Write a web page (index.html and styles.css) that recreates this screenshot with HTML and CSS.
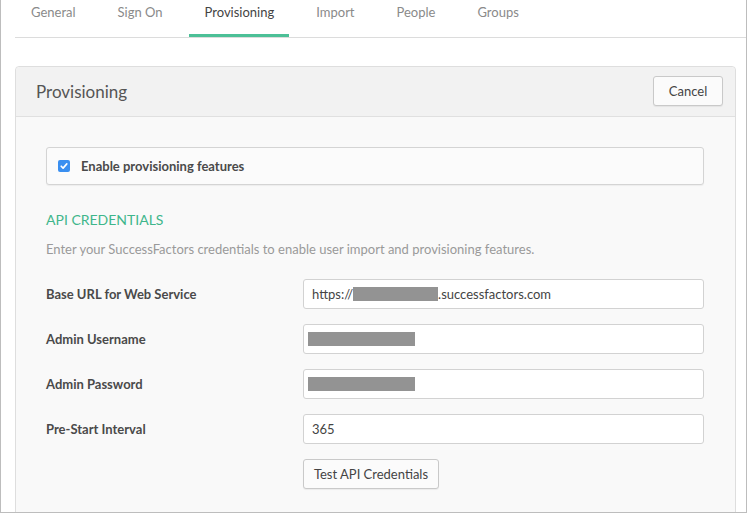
FILE: index.html
```html
<!DOCTYPE html>
<html>
<head>
<meta charset="utf-8">
<link rel="stylesheet" href="styles.css">
</head>
<body>
<div class="frame">
  <nav class="tabs">
    <div class="tab">General</div>
    <div class="tab">Sign On</div>
    <div class="tab active">Provisioning</div>
    <div class="tab">Import</div>
    <div class="tab">People</div>
    <div class="tab">Groups</div>
  </nav>
  <section class="panel">
    <header class="panel-head">
      <h2 class="panel-title">Provisioning</h2>
      <button class="btn">Cancel</button>
    </header>
    <div class="panel-body">
      <label class="check-box">
        <span class="checkbox">
          <svg width="12" height="12" viewBox="0 0 12 12"><path d="M3.2 6.2 L5.1 8.1 L8.8 3.9" fill="none" stroke="#fff" stroke-width="1.6" stroke-linecap="round" stroke-linejoin="round"/></svg>
        </span>
        <span class="check-label">Enable provisioning features</span>
      </label>
      <h3 class="section-title">API CREDENTIALS</h3>
      <p class="desc">Enter your SuccessFactors credentials to enable user import and provisioning features.</p>
      <div class="form">
        <div class="row">
          <div class="label">Base URL for Web Service</div>
          <div class="input">https://<span class="redact r1"></span>.successfactors.com</div>
        </div>
        <div class="row">
          <div class="label">Admin Username</div>
          <div class="input"><span class="redact r2"></span></div>
        </div>
        <div class="row">
          <div class="label">Admin Password</div>
          <div class="input"><span class="redact r2"></span></div>
        </div>
        <div class="row">
          <div class="label">Pre-Start Interval</div>
          <div class="input">365</div>
        </div>
        <div class="row">
          <div class="label"></div>
          <button class="btn btn-test">Test API Credentials</button>
        </div>
      </div>
    </div>
  </section>
</div>
</body>
</html>
```

FILE: styles.css
```css
* { box-sizing: border-box; }
html, body { margin: 0; padding: 0; background: #fff; }
body { font-family: "Lato", "Open Sans", Arial, sans-serif; color: #444; }

.frame {
  width: 747px;
  height: 513px;
  border-left: 1px solid #bdbdbd;
  border-right: 1px solid #bdbdbd;
  border-bottom: 1px solid #bdbdbd;
  overflow: hidden;
  padding-left: 14px;
}

.tabs {
  display: flex;
  gap: 11px;
  height: 38px;
  border-bottom: 1px solid #dcdcdc;
}
.tab {
  padding: 4px 15px 0 16px;
  height: 37px;
  font-size: 13px;
  color: #8a8a8a;
  line-height: 16px;
  border-bottom: 3px solid transparent;
}
.tab.active {
  color: #444;
  border-bottom-color: #4cc097;
}

.panel {
  margin-top: 28px;
  width: 721px;
  border: 1px solid #dedede;
  border-radius: 4px;
  background: #f9f9f9;
  height: 500px;
}
.panel-head {
  display: flex;
  align-items: center;
  justify-content: space-between;
  height: 50px;
  padding: 0 12px 0 20px;
  background: #f2f2f2;
  border-bottom: 1px solid #e0e0e0;
  border-radius: 4px 4px 0 0;
}
.panel-title {
  margin: 0;
  font-size: 17px;
  font-weight: 400;
  color: #555;
}
.btn {
  font-family: inherit;
  font-size: 13px;
  color: #444;
  background: #fbfbfb;
  border: 1px solid #c9c9c9;
  border-radius: 3px;
  height: 30px;
  padding: 0 12px;
  box-shadow: 0 1px 1px rgba(0,0,0,0.06);
}
.panel-head .btn { width: 70px; margin-top: -2px; }

.panel-body {
  padding: 30px 31px 0 30px;
}
.check-box {
  display: flex;
  align-items: center;
  height: 38px;
  background: #fbfbfb;
  border: 1px solid #d4d4d4;
  border-radius: 3px;
  padding-left: 11px;
  box-shadow: 0 1px 1px rgba(0,0,0,0.05);
}
.checkbox {
  width: 12px;
  height: 12px;
  border-radius: 2px;
  background: #3a8ff0;
  display: flex;
  align-items: center;
  justify-content: center;
  margin-right: 11px;
}
.checkbox svg { display: block; }
.check-label {
  font-size: 13px;
  font-weight: 700;
  color: #4a4a4a;
}
.section-title {
  margin: 26px 0 0;
  font-size: 14px;
  font-weight: 400;
  color: #3fb68b;
  line-height: 18px;
}
.desc {
  margin: 12px 0 0;
  font-size: 13px;
  color: #9a9a9a;
  line-height: 16px;
}
.form {
  margin-top: 22px;
  display: flex;
  flex-direction: column;
  gap: 15px;
}
.row {
  display: flex;
  align-items: center;
}
.label {
  width: 257px;
  font-size: 13px;
  font-weight: 700;
  color: #4a4a4a;
}
.input {
  width: 401px;
  height: 30px;
  background: #fff;
  border: 1px solid #d2d2d2;
  border-radius: 3px;
  padding: 0 8px;
  display: flex;
  align-items: center;
  font-size: 13px;
  color: #444;
}
.input .r2 { margin-left: -4px; }
.redact {
  display: inline-block;
  background: #939393;
  height: 14px;
}
.r1 { width: 85px; }
.r2 { width: 107px; }
.btn-test {
  width: 136px;
  padding: 0;
}
```
